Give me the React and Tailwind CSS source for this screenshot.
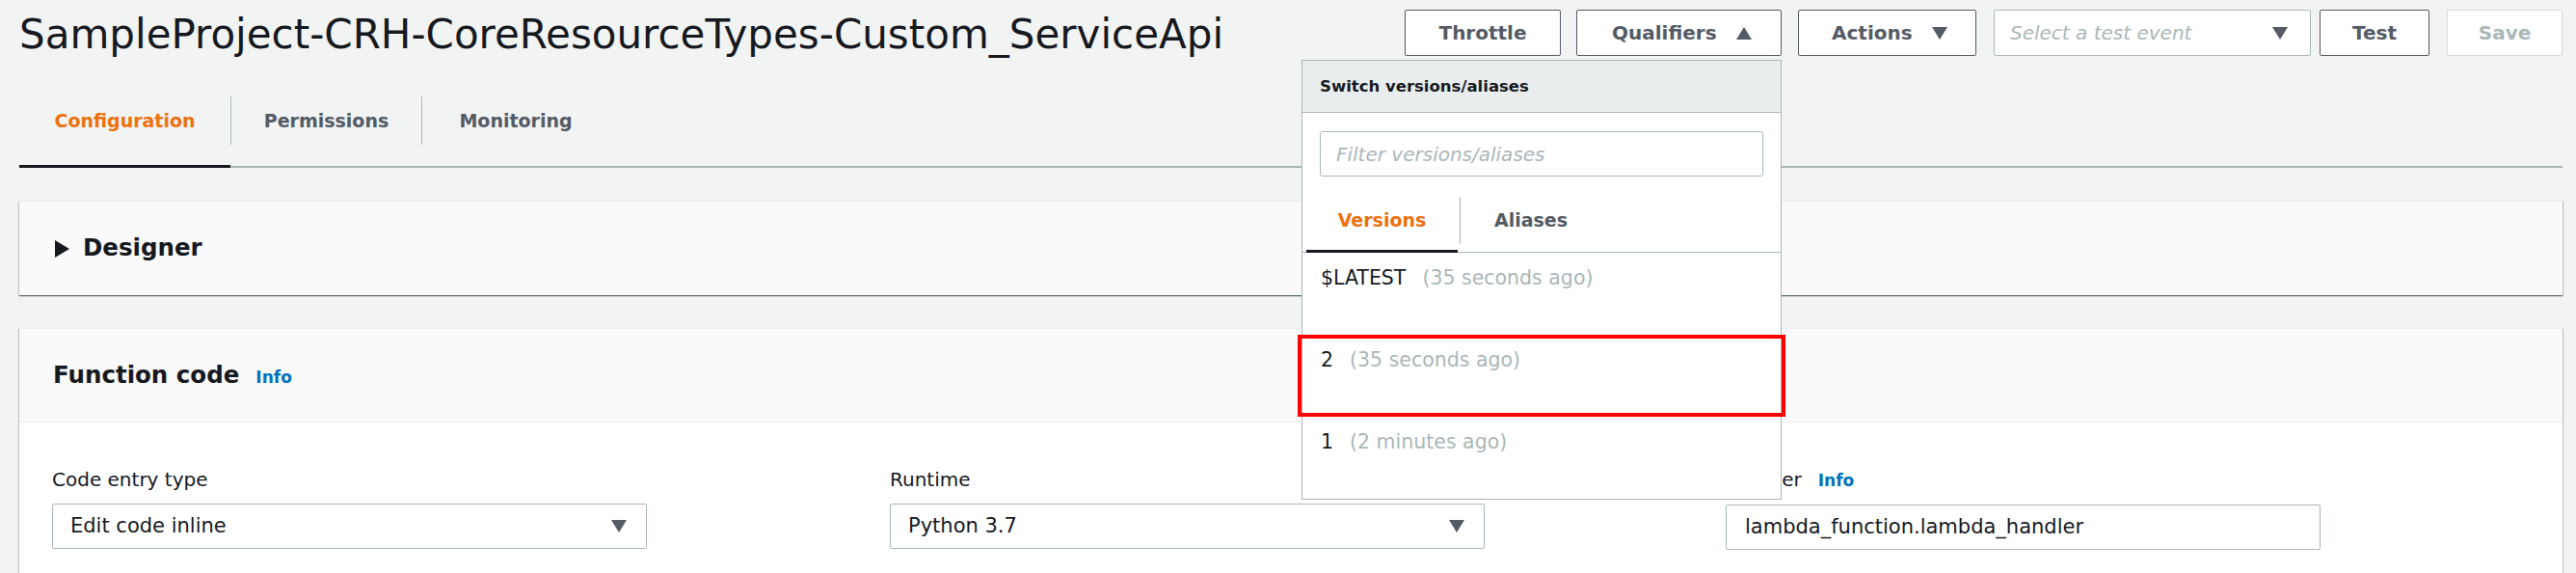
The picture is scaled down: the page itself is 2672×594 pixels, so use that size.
import React from 'react';

const Caret = ({ dir = 'down', className = '' }) => {
  const d = {
    down: 'M0 0 L16 0 L8 13 Z',
    up: 'M8 0 L16 13 L0 13 Z',
  }[dir];
  return (
    <svg className={className} width="16" height="13" viewBox="0 0 16 13">
      <path d={d} fill="#545b64" />
    </svg>
  );
};

const Btn = ({ children, className = '' }) => (
  <button className={`h-[48px] bg-white border border-[#545b64] rounded-[2px] text-[20px] font-bold text-[#545b64] flex items-center ${className}`}>
    {children}
  </button>
);

const Select = ({ value }) => (
  <div className="w-[617px] h-[47px] bg-white border border-[#aab7b8] rounded-[2px] flex items-center justify-between pl-[18px] pr-[20px] text-[21px] text-[#16191f]">
    <span>{value}</span>
    <Caret />
  </div>
);

const VersionRow = ({ name, ago, highlighted }) => (
  <div className="relative h-[85px] px-[19px] pt-[12px] text-[20.5px] leading-[28px]">
    <span className="text-[#16191f]">{name}</span>
    <span className="ml-[17px] text-[#aab7b8]">({ago})</span>
    {highlighted && (
      <div className="absolute -left-[5px] -right-[5px] top-0 bottom-0 border-4 border-[#ff0000]" />
    )}
  </div>
);

const QualifiersMenu = () => (
  <div className="absolute right-0 top-[52px] w-[498px] bg-white border border-[#aab7b8] z-10">
    <div className="h-[54px] bg-[#eaeded] border-b border-[#aab7b8] px-[18px] pt-[2px] flex items-center text-[16.5px] font-bold text-[#16191f]">
      Switch versions/aliases
    </div>
    <div className="mx-[18px] mt-[19px] h-[47px] border border-[#aab7b8] rounded-[3px] flex items-center pl-[16px] italic text-[20px] text-[#aab7b8]">
      Filter versions/aliases
    </div>
    <div className="mt-[21px] flex items-start border-b border-[#aab7b8]">
      <div className="ml-[4px] w-[157px] flex flex-col border-b-[3px] border-[#16191f] -mb-px">
        <div className="h-[49px] flex items-center justify-center text-[19px] font-bold text-[#ec7211]">Versions</div>
        <div className="h-[6px]" />
      </div>
      <span className="w-px h-[49px] bg-[#aab7b8] ml-[2px]" />
      <div className="h-[49px] flex items-center px-[35px] text-[19px] font-bold text-[#545b64]">Aliases</div>
    </div>
    <VersionRow name="$LATEST" ago="35 seconds ago" />
    <VersionRow name="2" ago="35 seconds ago" highlighted />
    <VersionRow name="1" ago="2 minutes ago" />
  </div>
);

const Tab = ({ label, active, width }) => (
  <div className={`flex flex-col ${width} ${active ? 'border-b-[3px] border-[#16191f] -mb-[2px]' : ''}`}>
    <div className={`h-[50px] flex items-center justify-center text-[19px] font-bold leading-none ${active ? 'text-[#ec7211]' : 'text-[#545b64]'}`}>
      {label}
    </div>
    <div className="h-[21px]" />
  </div>
);

const panelShadow = 'shadow-[0_1px_1px_0_rgba(0,28,36,0.5),1px_1px_1px_0_rgba(0,28,36,0.15),-1px_1px_1px_0_rgba(0,28,36,0.15)]';

export default function App() {
  return (
    <div className="h-[594px] overflow-hidden bg-[#f2f3f3] font-['DejaVu_Sans',Arial,sans-serif] text-[#16191f]">
      <div className="pl-[20px] pr-[14px]">
        {/* header */}
        <div className="flex items-start pt-[10px]">
          <h1 className="flex-1 mt-[3px] text-[42px] leading-[45px] font-normal whitespace-nowrap">
            SampleProject-CRH-CoreResourceTypes-Custom_ServiceApi
          </h1>
          <div className="flex items-center">
            <Btn className="w-[162px] justify-center">Throttle</Btn>
            <div className="relative ml-[16px]">
              <Btn className="w-[213px] pl-[36px] gap-[20px]">
                Qualifiers <Caret dir="up" />
              </Btn>
              <QualifiersMenu />
            </div>
            <Btn className="ml-[17px] w-[185px] pl-[34px] gap-[20px]">
              Actions <Caret />
            </Btn>
            <div className="ml-[18px] w-[329px] h-[48px] bg-white border border-[#aab7b8] rounded-[2px] flex items-center justify-between pl-[16px] pr-[23px]">
              <span className="italic text-[20px] text-[#aab7b8]">Select a test event</span>
              <Caret />
            </div>
            <Btn className="ml-[9px] w-[114px] justify-center">Test</Btn>
            <button className="ml-[18px] w-[120px] h-[48px] bg-white border border-[#d5dbdb] rounded-[2px] text-[20px] font-bold text-[#aab7b8]">
              Save
            </button>
          </div>
        </div>

        {/* tabs */}
        <div className="mt-[42px] flex items-start border-b-2 border-[#aab7b8]">
          <Tab label="Configuration" active width="w-[219px]" />
          <span className="w-px h-[50px] bg-[#aab7b8]" />
          <Tab label="Permissions" width="w-[197px]" />
          <span className="w-px h-[50px] bg-[#aab7b8]" />
          <Tab label="Monitoring" width="w-[194px]" />
        </div>

        {/* Designer */}
        <div className={`mt-[34px] h-[98px] bg-[#fafafa] border-t border-[#eaeded] ${panelShadow} flex items-center px-[37px] gap-[14px]`}>
          <svg width="15" height="18" viewBox="0 0 15 18">
            <path d="M0 0 L15 9 L0 18 Z" fill="#16191f" />
          </svg>
          <span className="text-[24.5px] font-bold">Designer</span>
        </div>

        {/* Function code */}
        <div className={`mt-[34px] bg-white border-t border-[#eaeded] ${panelShadow}`}>
          <div className="h-[97px] bg-[#fafafa] border-b border-[#eaeded] flex items-center px-[35px]">
            <div className="flex items-baseline">
              <span className="text-[24.5px] font-bold">Function code</span>
              <span className="ml-[17px] text-[17px] font-bold text-[#0073bb]">Info</span>
            </div>
          </div>
          <div className="grid grid-cols-[869px_867px_1fr] px-[34px] pt-[45px] pb-[40px]">
            <div>
              <div className="text-[20px] leading-[28px] mb-[11px]">Code entry type</div>
              <Select value="Edit code inline" />
            </div>
            <div>
              <div className="text-[20px] leading-[28px] mb-[11px]">Runtime</div>
              <Select value="Python 3.7" />
            </div>
            <div>
              <div className="text-[20px] leading-[28px] mb-[11px] flex items-baseline">
                Handler
                <span className="ml-[17px] text-[17px] font-bold text-[#0073bb]">Info</span>
              </div>
              <div className="w-[617px] h-[47px] bg-white border border-[#aab7b8] rounded-[2px] flex items-center pl-[19px] text-[21px]">
                lambda_function.lambda_handler
              </div>
            </div>
          </div>
        </div>
      </div>
    </div>
  );
}
